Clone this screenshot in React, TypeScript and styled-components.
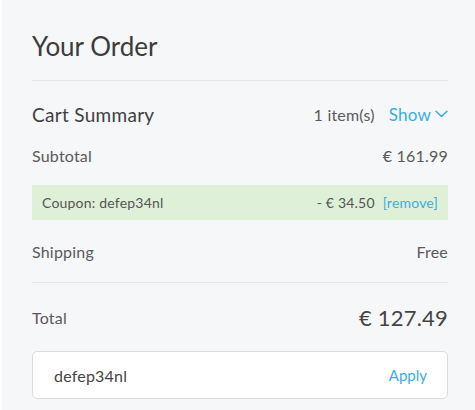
import styled, { createGlobalStyle } from "styled-components";

const GlobalStyle = createGlobalStyle`
  html, body {
    margin: 0;
    padding: 0;
    background: #ffffff;
  }
  body {
    font-family: "Lato", "Noto Sans", sans-serif;
    color: #555;
  }
`;

const Panel = styled.div`
  margin-left: 2px;
  height: 410px;
  background: #f6f7f9;
  padding: 30px 27px 0 30px;
  box-sizing: border-box;
  overflow: hidden;
`;

const Title = styled.h2`
  margin: 0;
  font-size: 26px;
  font-weight: 400;
  color: #3c3c3c;
  line-height: 32px;
  padding-bottom: 18px;
  border-bottom: 1px solid #e4e5e7;
`;

const Row = styled.div<{ $height?: number }>`
  display: flex;
  align-items: center;
  justify-content: space-between;
  height: ${(p) => p.$height ?? 40}px;
  font-size: 16px;
  color: #5a5a5a;
  letter-spacing: 0.2px;
`;

const Heading = styled.span`
  font-size: 19px;
  color: #3f3f3f;
  letter-spacing: 0.3px;
`;

const Right = styled.div<{ $gap?: number }>`
  display: flex;
  align-items: center;
  gap: ${(p) => p.$gap ?? 14}px;
`;

const Link = styled.a`
  color: #3aade4;
  text-decoration: none;
  display: inline-flex;
  align-items: center;
  gap: 4px;
  cursor: pointer;
`;

const ShowLink = styled(Link)`
  font-size: 17px;
`;

const Coupon = styled.div`
  display: flex;
  align-items: center;
  justify-content: space-between;
  height: 35px;
  margin: 22px 0 12px;
  padding: 0 10px;
  background: #dff0d8;
  font-size: 14px;
  color: #555;
  letter-spacing: 0.2px;
`;

const Divider = styled.div`
  height: 1px;
  background: #e4e5e7;
  margin-top: 12px;
`;

const Big = styled.span`
  font-size: 22px;
  color: #444;
`;

const InputBox = styled.div`
  display: flex;
  align-items: center;
  justify-content: space-between;
  height: 46px;
  padding: 0 20px 0 21px;
  background: #fff;
  border: 1px solid #dcdcdc;
  border-radius: 5px;
  font-size: 16px;
  color: #444;
`;

const CodeInput = styled.input`
  border: none;
  outline: none;
  background: transparent;
  font: inherit;
  color: inherit;
  letter-spacing: 0.2px;
  padding: 0;
  flex: 1;
`;

const ApplyLink = styled(Link)`
  font-size: 15px;
`;

const Chevron = () => (
  <svg width="13" height="8" viewBox="0 0 13 8" fill="none">
    <path d="M1 1.2 6.5 6.5 12 1.2" stroke="#3aade4" strokeWidth="1.5" strokeLinecap="round" strokeLinejoin="round" />
  </svg>
);

export default function App() {
  return (
    <>
      <GlobalStyle />
      <Panel>
        <Title>Your Order</Title>
        <Row $height={66}>
          <Heading>Cart Summary</Heading>
          <Right>
            <span>1 item(s)</span>
            <ShowLink>
              Show <Chevron />
            </ShowLink>
          </Right>
        </Row>
        <Row $height={16}>
          <span>Subtotal</span>
          <span>€ 161.99</span>
        </Row>
        <Coupon>
          <span>Coupon: defep34nl</span>
          <Right $gap={8}>
            <span>- € 34.50</span>
            <Link>[remove]</Link>
          </Right>
        </Coupon>
        <Row $height={38}>
          <span>Shipping</span>
          <span>Free</span>
        </Row>
        <Divider />
        <Row $height={68}>
          <span>Total</span>
          <Big>€ 127.49</Big>
        </Row>
        <InputBox>
          <CodeInput defaultValue="defep34nl" />
          <ApplyLink>Apply</ApplyLink>
        </InputBox>
      </Panel>
    </>
  );
}
